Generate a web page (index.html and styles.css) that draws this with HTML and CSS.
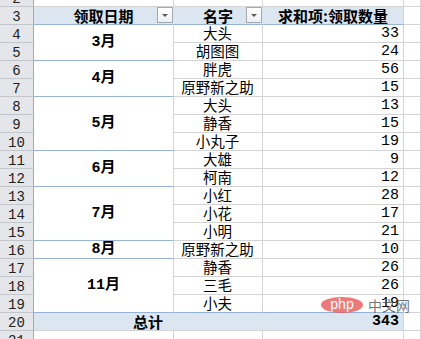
FILE: index.html
```html
<!DOCTYPE html>
<html lang="zh">
<head>
<meta charset="utf-8">
<title>数据透视表</title>
<link rel="stylesheet" href="styles.css">
</head>
<body>
<div class="sheet">
  <div class="rh">2</div><div class="c"></div><div class="c"></div><div class="c"></div><div class="c"></div>

  <div class="rh">3</div>
  <div class="c hd hdA">领取日期<span class="dd"></span></div>
  <div class="c hd hdB">名字<span class="dd"></span></div>
  <div class="c hd hdC">求和项:领取数量</div>
  <div class="c"></div>

  <div class="rh">4</div><div class="c mon s2">3月</div><div class="c nm">大头</div><div class="c num">33</div><div class="c"></div>
  <div class="rh">5</div><div class="c nm">胡图图</div><div class="c num">24</div><div class="c"></div>
  <div class="rh">6</div><div class="c mon s2">4月</div><div class="c nm">胖虎</div><div class="c num">56</div><div class="c"></div>
  <div class="rh">7</div><div class="c nm">原野新之助</div><div class="c num">15</div><div class="c"></div>
  <div class="rh">8</div><div class="c mon s3">5月</div><div class="c nm">大头</div><div class="c num">13</div><div class="c"></div>
  <div class="rh">9</div><div class="c nm">静香</div><div class="c num">15</div><div class="c"></div>
  <div class="rh">10</div><div class="c nm">小丸子</div><div class="c num">19</div><div class="c"></div>
  <div class="rh">11</div><div class="c mon s2">6月</div><div class="c nm">大雄</div><div class="c num">9</div><div class="c"></div>
  <div class="rh">12</div><div class="c nm">柯南</div><div class="c num">12</div><div class="c"></div>
  <div class="rh">13</div><div class="c mon s3">7月</div><div class="c nm">小红</div><div class="c num">28</div><div class="c"></div>
  <div class="rh">14</div><div class="c nm">小花</div><div class="c num">17</div><div class="c"></div>
  <div class="rh">15</div><div class="c nm">小明</div><div class="c num">21</div><div class="c"></div>
  <div class="rh">16</div><div class="c mon">8月</div><div class="c nm">原野新之助</div><div class="c num">10</div><div class="c"></div>
  <div class="rh">17</div><div class="c mon s3 last">11月</div><div class="c nm">静香</div><div class="c num">26</div><div class="c"></div>
  <div class="rh">18</div><div class="c nm">三毛</div><div class="c num">26</div><div class="c"></div>
  <div class="rh">19</div><div class="c nm last">小夫</div><div class="c num last">19</div><div class="c"></div>

  <div class="rh">20</div>
  <div class="c tot totL">总计</div>
  <div class="c tot totN">343</div>
  <div class="c"></div>

  <div class="rh">21</div><div class="c"></div><div class="c"></div><div class="c"></div><div class="c"></div>
</div>
<div class="wm"><span class="php">php</span><span class="cn">中文网</span></div>
</body>
</html>
```
FILE: styles.css
```css
html, body {
  margin: 0;
  padding: 0;
  background: #ffffff;
  overflow: hidden;
}
body {
  width: 421px;
  height: 339px;
  position: relative;
  font-family: "Noto Sans CJK SC", sans-serif;
  color: #000;
}
.sheet {
  margin-top: -11px;
  display: grid;
  grid-template-columns: 34px 140px 89px 141px 1fr;
  grid-auto-rows: 18px;
}
.c, .rh {
  box-sizing: border-box;
  border-right: 1px solid #d4d4d4;
  border-bottom: 1px solid #d4d4d4;
  white-space: nowrap;
}
.rh {
  background: #e4e6ea;
  border-right: 1px solid #a4a9b0;
  border-bottom: 1px solid #c3c6cb;
  font-family: "Liberation Mono", monospace;
  font-size: 14px;
  line-height: 15px;
  padding-top: 3px;
  text-align: center;
  color: #222;
}
.hd {
  position: relative;
  background: #dce6f1;
  border-right-color: #dce6f1;
  border-bottom-color: #95b3d7;
  font-weight: bold;
  font-size: 15px;
  line-height: 17px;
  text-align: center;
}
.hdC {
  border-right-color: #d4d4d4;
}
.dd {
  position: absolute;
  right: 0;
  top: 0;
  width: 16px;
  height: 16px;
  box-sizing: border-box;
  border: 1px solid #a3a9b1;
  background: linear-gradient(#ffffff, #eef0f3);
}
.dd::after {
  content: "";
  position: absolute;
  left: 4px;
  top: 6px;
  border-left: 3px solid transparent;
  border-right: 3px solid transparent;
  border-top: 3px solid #5a5a5a;
}
.mon {
  border-bottom-color: #95b3d7;
  display: flex;
  align-items: center;
  justify-content: center;
  font-family: "Liberation Mono", "Noto Sans CJK SC", monospace;
  font-weight: bold;
  font-size: 15px;
  line-height: 17px;
}
.s2 { grid-row: span 2; }
.s3 { grid-row: span 3; }
.nm {
  text-align: center;
  font-size: 14.5px;
  line-height: 16px;
  padding-right: 1px;
}
.num {
  text-align: right;
  padding-right: 4px;
  font-family: "Liberation Mono", monospace;
  font-size: 15px;
  line-height: 17px;
}
.last {
  border-bottom-color: #95b3d7;
}
.tot {
  background: #dce6f1;
  font-weight: bold;
  line-height: 17px;
}
.totL {
  grid-column: span 2;
  border-right-color: #dce6f1;
  text-align: center;
  font-size: 15px;
}
.totN {
  text-align: right;
  padding-right: 4px;
  font-family: "Liberation Mono", monospace;
  font-size: 15px;
}
.wm {
  position: absolute;
  left: 321px;
  top: 297px;
  display: flex;
  align-items: center;
  gap: 5px;
}
.php {
  width: 42px;
  height: 16px;
  border-radius: 50%;
  background: rgba(229, 84, 84, 0.78);
  color: #ffffff;
  font-family: "Liberation Sans", sans-serif;
  font-size: 14px;
  line-height: 15px;
  text-align: center;
}
.cn {
  color: rgba(70, 70, 70, 0.75);
  font-size: 14px;
  line-height: 16px;
}
```
